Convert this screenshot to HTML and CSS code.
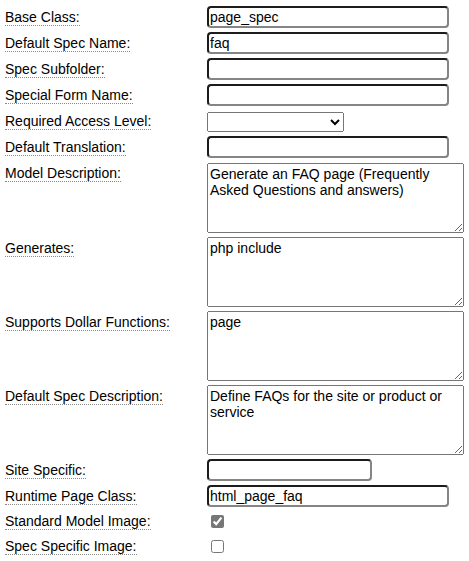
FILE: index.html
```html
<!DOCTYPE html>
<html>
<head>
<meta charset="utf-8">
<link rel="stylesheet" href="styles.css">
</head>
<body>
<form class="form">
  <div class="lbl"><span class="hint">Base Class:</span></div>
  <div class="fld"><input class="txt" type="text" value="page_spec"></div>

  <div class="lbl"><span class="hint">Default Spec Name:</span></div>
  <div class="fld"><input class="txt" type="text" value="faq"></div>

  <div class="lbl"><span class="hint">Spec Subfolder:</span></div>
  <div class="fld"><input class="txt" type="text" value=""></div>

  <div class="lbl"><span class="hint">Special Form Name:</span></div>
  <div class="fld"><input class="txt" type="text" value=""></div>

  <div class="lbl"><span class="hint">Required Access Level:</span></div>
  <div class="fld"><select class="sel"><option></option></select></div>

  <div class="lbl"><span class="hint">Default Translation:</span></div>
  <div class="fld"><input class="txt" type="text" value=""></div>

  <div class="lbl lbl-area"><span class="hint">Model Description:</span></div>
  <div class="fld fld-area"><textarea class="area" rows="4">Generate an FAQ page (Frequently Asked Questions and answers)</textarea></div>

  <div class="lbl lbl-area"><span class="hint">Generates:</span></div>
  <div class="fld"><textarea class="area" rows="4">php include</textarea></div>

  <div class="lbl lbl-area"><span class="hint">Supports Dollar Functions:</span></div>
  <div class="fld"><textarea class="area" rows="4">page</textarea></div>

  <div class="lbl lbl-area"><span class="hint">Default Spec Description:</span></div>
  <div class="fld"><textarea class="area" rows="4">Define FAQs for the site or product or service</textarea></div>

  <div class="lbl"><span class="hint">Site Specific:</span></div>
  <div class="fld"><input class="txt txt-short" type="text" value=""></div>

  <div class="lbl"><span class="hint">Runtime Page Class:</span></div>
  <div class="fld"><input class="txt" type="text" value="html_page_faq"></div>

  <div class="lbl lbl-check"><span class="hint">Standard Model Image:</span></div>
  <div class="fld fld-check"><input class="chk" type="checkbox" checked></div>

  <div class="lbl lbl-check"><span class="hint">Spec Specific Image:</span></div>
  <div class="fld fld-check"><input class="chk" type="checkbox"></div>
</form>
</body>
</html>
```
FILE: styles.css
```css
html, body {
  margin: 0;
  padding: 0;
  background: #ffffff;
}

body {
  font-family: "Liberation Sans", Arial, sans-serif;
  font-size: 14px;
  line-height: 16px;
  color: #000000;
}

.form {
  display: grid;
  grid-template-columns: 198px 1fr;
  column-gap: 4px;
  row-gap: 4px;
  padding: 6px 0 0 5px;
  margin: 0;
}

.lbl {
  padding-top: 3px;
  white-space: nowrap;
}

.lbl-area {
  padding-top: 3px;
}

.lbl-check {
  padding-top: 2px;
}

.hint {
  border-bottom: 1px dotted #8a8a8a;
}

.fld {
  display: flex;
  align-items: flex-start;
  min-height: 22px;
}

.fld-area {
  padding-top: 1px;
}

.fld-check {
  min-height: 21px;
}

.txt {
  box-sizing: border-box;
  width: 242px;
  height: 22px;
  margin: 0;
  padding: 1px 2px 1px 1px;
  font-family: "Liberation Sans", Arial, sans-serif;
  font-size: 14px;
  line-height: 16px;
  color: #000000;
  background: #ffffff;
  border-style: solid;
  border-width: 2px;
  border-color: #1c1c1c #858585 #858585 #1c1c1c;
  border-radius: 4px;
  outline: none;
}

.txt-short {
  width: 165px;
}

.sel {
  box-sizing: border-box;
  width: 137px;
  height: 20px;
  margin: 2px 0 0 0;
  font-family: "Liberation Sans", Arial, sans-serif;
  font-size: 14px;
}

.area {
  box-sizing: border-box;
  display: block;
  width: 257px;
  height: 70px;
  margin: 0;
  padding: 2px;
  font-family: "Liberation Sans", Arial, sans-serif;
  font-size: 14px;
  line-height: 16px;
  color: #000000;
}

.chk {
  width: 13px;
  height: 13px;
  margin: 4px 0 0 4px;
  accent-color: #767676;
}
```
